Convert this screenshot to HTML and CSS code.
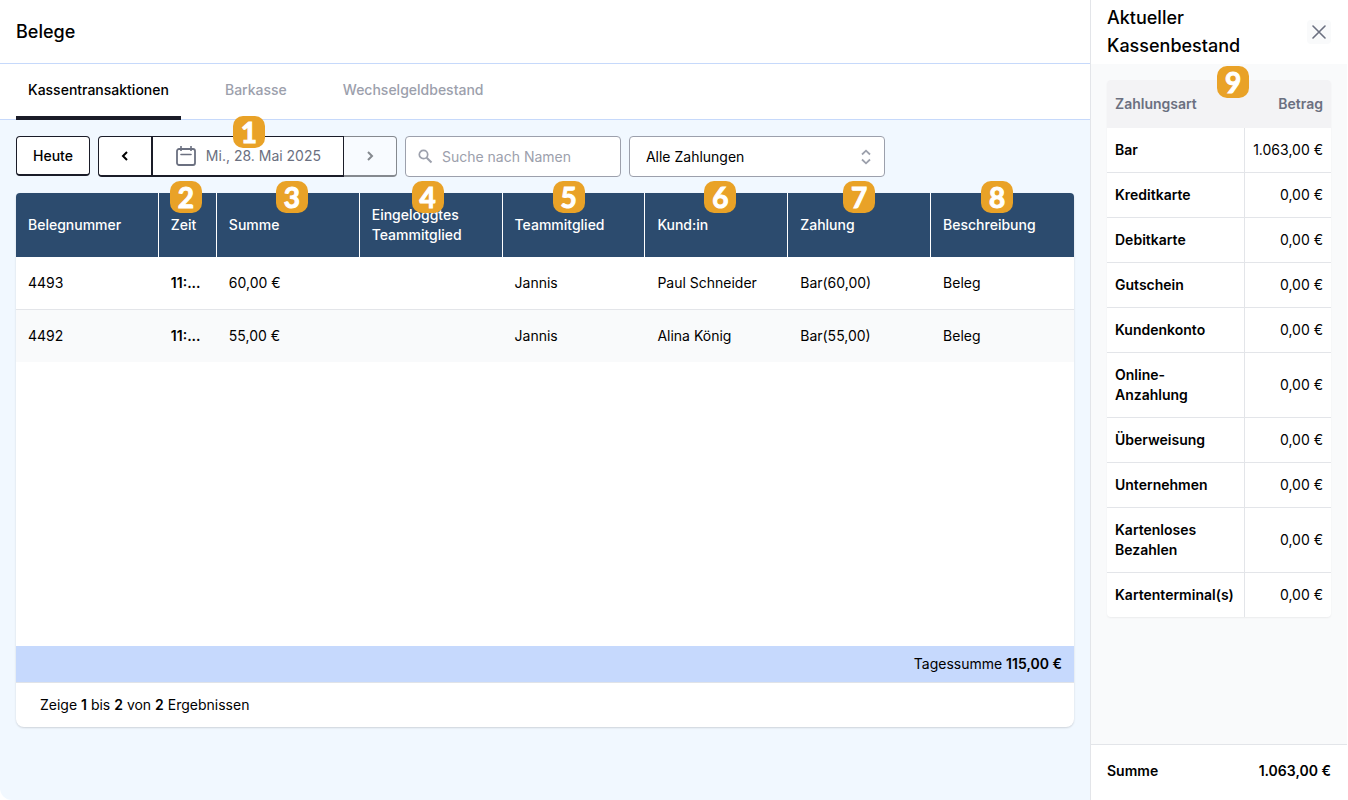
FILE: index.html
```html
<!DOCTYPE html>
<html lang="de">

	<head>
		<title>Belege</title>
		<meta charset="utf-8" />
		<link rel="stylesheet" href="styles.css">
	</head>

	<body>
		<main class="main">
			<header class="header">
				<h1 class="title">Belege</h1>
			</header>
			<nav class="tabs">
				<a class="tab active" href="#kassentransaktionen">Kassentransaktionen</a>
				<a class="tab" href="#barkasse">Barkasse</a>
				<a class="tab" href="#wechselgeld">Wechselgeldbestand</a>
			</nav>
			<div class="content">
				<div class="toolbar">
					<button type="button" class="today">Heute</button>
					<div class="datePicker">
						<button type="button" class="prev" aria-label="Vorheriger Tag">
							<svg width="8" height="12" viewBox="0 0 8 12"><path d="M6 2 2 6l4 4" fill="none" stroke="#000" stroke-width="2" /></svg>
						</button>
						<button type="button" class="date">
							<svg width="22" height="22" viewBox="0 0 22 22" fill="none" stroke="#6b7080" stroke-width="1.800"><rect x="2" y="4" width="18" height="16" rx="2" /><path d="M6 1v5M16 1v5" stroke-width="1.600" /><path d="M6 9.500h10" stroke-linecap="round" stroke-width="1.600" /></svg>
							<span>Mi., 28. Mai 2025</span>
						</button>
						<button type="button" class="next" aria-label="Nächster Tag" disabled>
							<svg width="8" height="12" viewBox="0 0 8 12"><path d="m2 2 4 4-4 4" fill="none" stroke="#85898f" stroke-width="2" /></svg>
						</button>
						<span class="pin pin1">1</span>
					</div>
					<div class="search">
						<svg width="15" height="15" viewBox="0 0 15 15" fill="none" stroke="#9ca0ac"><circle cx="5.500" cy="5.500" r="4.200" stroke-width="1.700" /><path d="m8.700 8.700 4.800 4.800" stroke-width="2" /></svg>
						<input type="text" placeholder="Suche nach Namen" aria-label="Suche nach Namen" />
					</div>
					<div class="select">
						<select aria-label="Zahlungen">
							<option>Alle Zahlungen</option>
						</select>
						<svg width="10" height="16" viewBox="0 0 10 16" fill="none" stroke="#9ca0ac" stroke-width="1.800"><path d="M1 5.500 5 1.700l4 3.800M1 10.500l4 3.800 4-3.800" /></svg>
					</div>
				</div>
				<div class="card">
					<div class="cardBody">
						<table class="receipts">
							<thead>
								<tr>
									<th>Belegnummer</th>
									<th class="time">Zeit<span class="pin pin2">2</span></th>
									<th>Summe<span class="pin pin3">3</span></th>
									<th>Eingeloggtes Teammitglied<span class="pin pin4">4</span></th>
									<th>Teammitglied<span class="pin pin5">5</span></th>
									<th>Kund:in<span class="pin pin6">6</span></th>
									<th>Zahlung<span class="pin pin7">7</span></th>
									<th>Beschreibung<span class="pin pin8">8</span></th>
								</tr>
							</thead>
							<tbody>
								<tr>
									<td>4493</td>
									<td class="bold">11:...</td>
									<td>60,00 €</td>
									<td></td>
									<td>Jannis</td>
									<td>Paul Schneider</td>
									<td>Bar(60,00)</td>
									<td>Beleg</td>
								</tr>
								<tr>
									<td>4492</td>
									<td class="bold">11:...</td>
									<td>55,00 €</td>
									<td></td>
									<td>Jannis</td>
									<td>Alina König</td>
									<td>Bar(55,00)</td>
									<td>Beleg</td>
								</tr>
							</tbody>
						</table>
					</div>
					<div class="daySum">Tagessumme <b>115,00 €</b></div>
					<div class="paging">Zeige <b>1</b> bis <b>2</b> von <b>2</b> Ergebnissen</div>
				</div>
			</div>
		</main>
		<aside class="side">
			<header class="sideHeader">
				<h2 class="title">Aktueller Kassenbestand</h2>
				<button type="button" class="close" aria-label="Schließen">
					<svg width="14" height="14" viewBox="0 0 14 14"><path d="m1 1 12 12M13 1 1 13" stroke="#6b7080" stroke-width="1.600" stroke-linecap="round" /></svg>
				</button>
			</header>
			<div class="sideBody">
				<table class="stock">
					<thead>
						<tr>
							<th>Zahlungsart</th>
							<th>Betrag</th>
						</tr>
					</thead>
					<tbody>
						<tr><th>Bar</th><td>1.063,00 €</td></tr>
						<tr><th>Kreditkarte</th><td>0,00 €</td></tr>
						<tr><th>Debitkarte</th><td>0,00 €</td></tr>
						<tr><th>Gutschein</th><td>0,00 €</td></tr>
						<tr><th>Kundenkonto</th><td>0,00 €</td></tr>
						<tr><th>Online-Anzahlung</th><td>0,00 €</td></tr>
						<tr><th>Überweisung</th><td>0,00 €</td></tr>
						<tr><th>Unternehmen</th><td>0,00 €</td></tr>
						<tr><th>Kartenloses Bezahlen</th><td>0,00 €</td></tr>
						<tr><th>Kartenterminal(s)</th><td>0,00 €</td></tr>
					</tbody>
				</table>
				<span class="pin pin9">9</span>
			</div>
			<footer class="sideFooter"><span>Summe</span><span>1.063,00 €</span></footer>
		</aside>
	</body>

</html>
```
FILE: styles.css
```css
* {box-sizing: border-box;}
body {margin: 0;padding-right: 1px;min-height: 100vh;display: flex;background: #fff;color: #000;font: 14px/20px Inter, "Liberation Sans", sans-serif;}
button, input, select {font: inherit;color: inherit;margin: 0;}
svg {display: block;flex: none;}
b, .bold {font-weight: 600;}
.title {margin: 0;font-size: 18px;line-height: 28px;font-weight: 500;}

.main {flex: 1;min-width: 0;display: flex;flex-direction: column;}
.header {height: 64px;padding: 0 16px;display: flex;align-items: center;border-bottom: 1px solid #c6d9fb;}
.tabs {height: 56px;padding: 0 16px;display: flex;gap: 32px;border-bottom: 1px solid #c6d9fb;}
.tab {height: 56px;padding: 16px 12px;border-bottom: 4px solid transparent;color: #9ca0ac;font-weight: 500;text-decoration: none;}
.tab.active {color: #000;border-color: #1a1c28;}
.content {flex: 1;padding: 16px 16px 73px;display: flex;flex-direction: column;gap: 16px;background: #f1f8ff;border-bottom-left-radius: 12px;}

.toolbar {display: flex;align-items: flex-start;gap: 8px;}
.today {height: 40px;padding: 0 16px;background: #fff;border: 1px solid #1a1c28;border-bottom-width: 2px;border-radius: 4px;font-weight: 500;}
.datePicker {position: relative;height: 41px;display: flex;}
.datePicker button {display: flex;align-items: center;justify-content: center;background: #fff;border: 1px solid #1a1c28;border-bottom-width: 2px;padding: 0;}
.datePicker .prev {width: 54px;border-radius: 4px 0 0 4px;}
.datePicker .date {width: 192px;gap: 9px;color: #6b7080;}
.datePicker .next {width: 53px;background: #f8fbff;border-color: #85898f;border-left: 0;border-radius: 0 4px 4px 0;}
.search {width: 216px;height: 41px;padding: 0 12px;display: flex;align-items: center;gap: 9px;background: #fff;border: 1px solid #9ca0ac;border-radius: 4px;}
.search input {flex: 1;min-width: 0;padding: 0;border: 0;outline: 0;background: none;}
.search input::placeholder {color: #9ca0ac;opacity: 1;}
.select {position: relative;width: 256px;height: 41px;}
.select select {width: 100%;height: 100%;padding: 0 16px;appearance: none;background: #fff;border: 1px solid #9ca0ac;border-radius: 4px;}
.select svg {position: absolute;right: 14px;top: 13px;pointer-events: none;}

.card {flex: 1;display: flex;flex-direction: column;background: #fff;border-radius: 4px 4px 8px 8px;box-shadow: 0 1px 2px rgba(0,0,0,0.15);}
.cardBody {flex: 1;}
table {border-collapse: separate;border-spacing: 0;}
th {text-align: left;}
.receipts {width: 100%;table-layout: fixed;}
.receipts th {position: relative;height: 64px;padding: 0 12px;background: #2c4b6e;color: #fff;font-weight: 500;border-right: 1px solid #fff;}
.receipts th:first-child {border-top-left-radius: 4px;}
.receipts th:last-child {border-top-right-radius: 4px;border-right: 0;}
.receipts .time {width: 58px;}
.receipts td {padding: 16px 12px;}
.receipts tr:first-child td {border-bottom: 1px solid #e3e5e9;}
.receipts tr:nth-child(2) td {background: #f9fafb;}
.daySum {padding: 8px 12px;background: #c6d9fd;text-align: right;}
.paging {padding: 12px 24px;border-top: 1px solid #e0e3e8;}

.side {width: 257px;display: flex;flex-direction: column;background: #f9fafb;border-left: 1px solid #e3e5e9;}
.sideHeader {height: 64px;padding: 0 16px;display: flex;align-items: center;justify-content: space-between;background: #fff;}
.sideHeader .title {width: 150px;}
.close {width: 24px;height: 24px;padding: 0;display: flex;align-items: center;justify-content: center;background: #f9fafb;border: 0;border-radius: 4px;}
.sideBody {position: relative;flex: 1;padding: 16px;}
.stock {width: 100%;background: #fff;border-radius: 4px;box-shadow: 0 1px 2px rgba(0,0,0,0.06);}
.stock th, .stock td {padding: 12px 8px;}
.stock td {text-align: right;white-space: nowrap;}
.stock th {font-weight: 600;}
.stock thead th {padding: 14px 8px;background: #f3f3f5;color: #6b7080;}
.stock thead th:first-child {border-top-left-radius: 4px;}
.stock thead th:last-child {border-top-right-radius: 4px;text-align: right;}
.stock tbody th {border-right: 1px solid #e3e5e9;}
.stock tbody tr:not(:last-child) > * {border-bottom: 1px solid #e3e5e9;}
.sideFooter {padding: 16px 16px 19px;display: flex;justify-content: space-between;background: #fff;border-top: 1px solid #e3e5e9;font-weight: 600;}

/* numbered markers */
.pin {position: absolute;top: -12px;z-index: 1;width: 32px;height: 32px;border-radius: 10px;background: #e9a227;color: #fff;font: 700 28px/32px Lato, sans-serif;text-align: center;-webkit-text-stroke: 1px #fff;}
.pin1 {left: 135px;top: -20px;}
.pin2 {left: 11px;}
.pin3 {left: 59px;}
.pin4 {left: 52px;}
.pin5 {left: 50px;}
.pin6 {left: 59px;}
.pin7 {left: 55px;}
.pin8 {left: 50px;}
.pin9 {left: 126px;top: 2px;}
```
